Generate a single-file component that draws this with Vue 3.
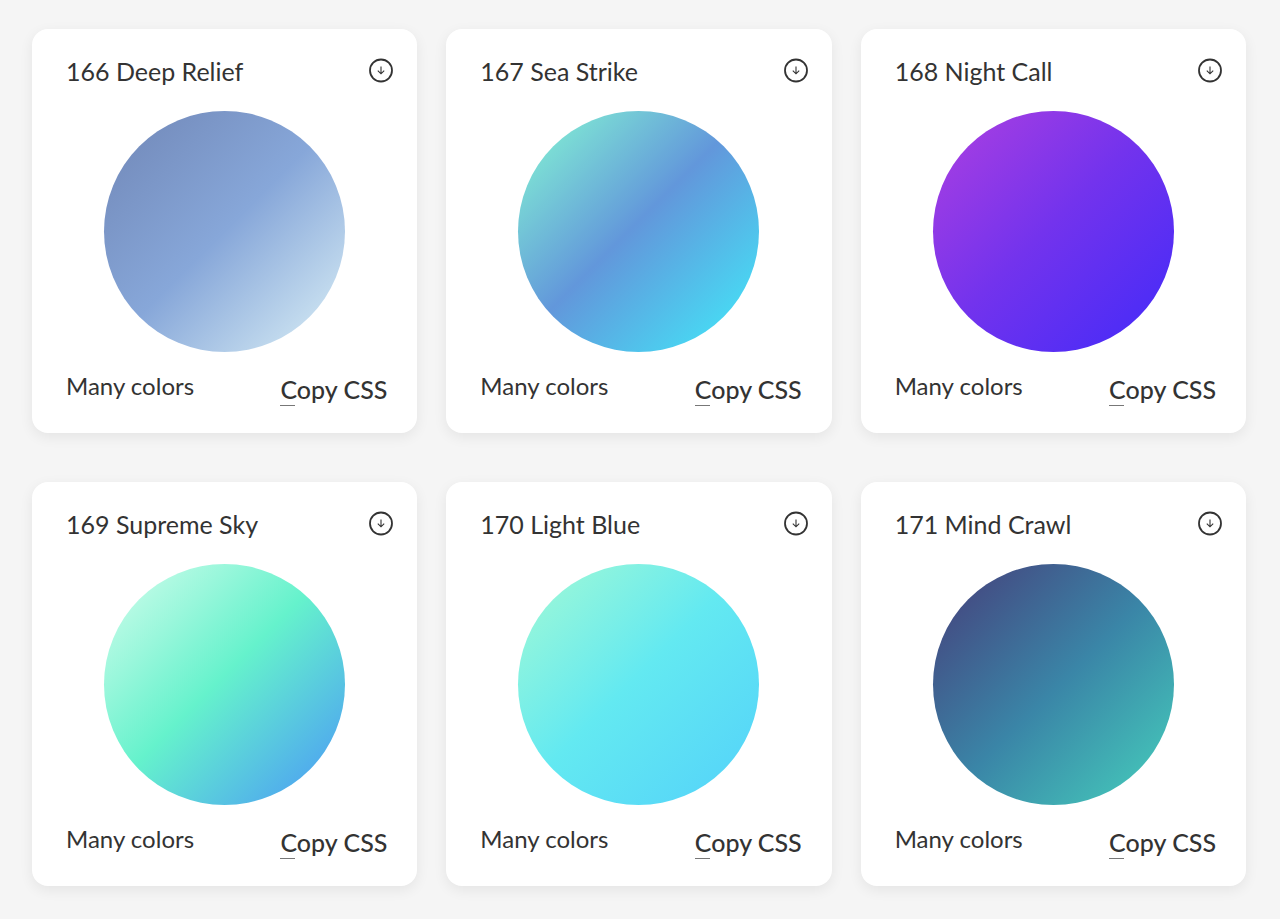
<template>
  <main class="gradients-page">
    <article v-for="item in gradients" :key="item.id" class="gradient-card">
      <header class="card-header">
        <h2>{{ item.id }} {{ item.name }}</h2>
        <button class="download-btn" type="button" :aria-label="`Download ${item.name}`">
          <svg viewBox="0 0 24 24" width="24" height="24" fill="none" stroke="currentColor">
            <circle cx="12" cy="11.5" r="11" stroke-width="1.8" />
            <path d="M12 7.6v7M8.8 11.6l3.2 3.2 3.2-3.2" stroke-width="1.1" />
          </svg>
        </button>
      </header>
      <div class="swatch" :style="{ backgroundImage: toCss(item.stops) }"></div>
      <footer class="card-footer">
        <span class="colors-label">Many colors</span>
        <button class="copy-btn" type="button" @click="copyCss(item)">Copy CSS</button>
      </footer>
    </article>
  </main>
</template>

<script setup>
const gradients = [
  { id: 166, name: 'Deep Relief', stops: ['#7086B6 0%', '#87A7D9 50%', '#DCF1F7 100%'] },
  { id: 167, name: 'Sea Strike', stops: ['#86FAD2 0%', '#6297DB 48%', '#40EDFB 100%'] },
  { id: 168, name: 'Night Call', stops: ['#AE40E0 0%', '#7333ED 48%', '#412AF9 100%'] },
  { id: 169, name: 'Supreme Sky', stops: ['#D6FDED 0%', '#65F2CC 48%', '#4994F8 100%'] },
  { id: 170, name: 'Light Blue', stops: ['#A5FAD4 0%', '#63E9F1 48%', '#53D1FA 100%'] },
  { id: 171, name: 'Mind Crawl', stops: ['#463C79 0%', '#3A85A7 51%', '#46D1BD 100%'] }
]

function toCss(stops) {
  return `linear-gradient(-225deg, ${stops.join(', ')})`
}

function copyCss(item) {
  navigator.clipboard.writeText(`background-image: ${toCss(item.stops)};`)
}
</script>

<style>
body {
  background: #f5f5f5;
}
</style>

<style scoped>
.gradients-page {
  display: grid;
  grid-template-columns: repeat(3, 1fr);
  gap: 49px 29px;
  padding: 29px 34px 32px 32px;
  font-family: Lato, "Open Sans", sans-serif;
  color: #333;
}
.gradient-card {
  display: flex;
  flex-direction: column;
  background: #fff;
  border-radius: 16px;
  box-shadow: 0 4px 14px rgba(0, 0, 0, 0.07);
}
.card-header {
  display: flex;
  align-items: center;
  justify-content: space-between;
  padding: 26px 24px 0 34px;
}
.card-header h2 {
  margin: 0;
  font-size: 25px;
  font-weight: 400;
  line-height: 32px;
}
.download-btn {
  display: block;
  height: 24px;
  padding: 0;
  border: none;
  background: none;
  color: #333;
  cursor: pointer;
}
.download-btn svg {
  display: block;
  overflow: visible;
}
.swatch {
  align-self: center;
  width: 241px;
  height: 241px;
  margin-top: 24px;
  border-radius: 50%;
}
.card-footer {
  display: flex;
  align-items: flex-start;
  justify-content: space-between;
  padding: 18px 30px 28px 34px;
}
.colors-label {
  font-size: 24px;
  line-height: 32px;
}
.copy-btn {
  position: relative;
  margin-top: 3px;
  padding: 0;
  border: none;
  background: none;
  color: #333;
  font-family: inherit;
  font-size: 25px;
  font-weight: 500;
  line-height: 32px;
  cursor: pointer;
}
.copy-btn::after {
  content: "";
  position: absolute;
  left: 0;
  bottom: -1px;
  width: 15px;
  height: 1px;
  background: #777;
}
</style>
